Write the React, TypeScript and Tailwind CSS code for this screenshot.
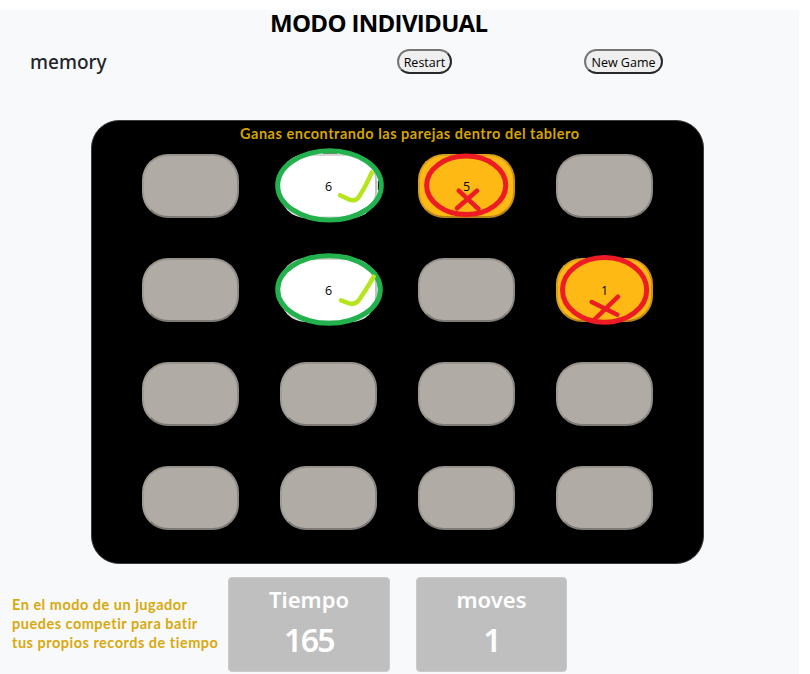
type TileState = "hidden" | "matched" | "wrong";

interface Tile {
  state: TileState;
  value?: number;
}

const hidden: Tile = { state: "hidden" };

const tiles: Tile[] = [
  hidden, { state: "matched", value: 6 }, { state: "wrong", value: 5 }, hidden,
  hidden, { state: "matched", value: 6 }, hidden, { state: "wrong", value: 1 },
  hidden, hidden, hidden, hidden,
  hidden, hidden, hidden, hidden,
];

const tileStyles: Record<TileState, string> = {
  hidden: "bg-[#b0aba5] border-t-[#98938e] border-l-[#a09b95] border-r-[#8d8984] border-b-[#7d7975]",
  matched: "bg-white border-t-[#d5d5d5] border-l-white border-r-[#c3c3c3] border-b-[#e5e5e5]",
  wrong: "bg-[#ffb914] border-t-[#d9a020] border-l-[#d9a020] border-r-[#cb9219] border-b-[#b98417]",
};

function PillButton({ label, className }: { label: string; className: string }) {
  return (
    <button
      className={`h-[25px] shrink-0 rounded-full border-2 border-t-[#767676] border-l-[#767676] border-r-[#292929] border-b-[#292929] bg-[#efefef] pt-[2px] text-[12.5px] leading-[19px] whitespace-nowrap text-black ${className}`}
    >
      {label}
    </button>
  );
}

function Stat({ label, value, className }: { label: string; value: number; className: string }) {
  return (
    <section
      className={`flex h-[95px] shrink-0 flex-col items-center rounded border border-[#cacaca] bg-[#bfbfbf] text-white ${className}`}
    >
      <h2 className="mt-[5px] font-['Noto_Sans',sans-serif] text-[22px] leading-[32px] font-semibold">{label}</h2>
      <p className="mt-[5px] font-['Noto_Sans',sans-serif] text-[32px] leading-[40px] font-semibold tracking-[-1.6px]">
        {value}
      </p>
    </section>
  );
}

/* Hand-drawn marks over the revealed tiles, in board coordinates. */
function Marks() {
  return (
    <svg
      className="pointer-events-none absolute -top-px -left-px h-[443px] w-[612px]"
      viewBox="91 120 612 443"
      fill="none"
      strokeWidth="5"
      strokeLinecap="round"
      strokeLinejoin="round"
    >
      <path stroke="#000" strokeWidth="1.5" strokeLinecap="butt" d="M323 152.8 H337 M378.6 181 V190" />
      <g stroke="#22b14c">
        <ellipse cx="329.5" cy="185.4" rx="51.8" ry="34.7" />
        <ellipse cx="329" cy="289.5" rx="51.3" ry="33.8" />
      </g>
      <g stroke="#b5e61d" strokeWidth="4.5">
        <path d="M340 195.3 L348 199 Q356 203 360 195 Q366 186 371.7 172.7" />
        <path d="M341 300.3 L348 303 Q355 306 360 298.5 Q366 290 373.7 276.7" />
      </g>
      <g stroke="#ed1c24">
        <ellipse cx="466.2" cy="185.3" rx="39.6" ry="29.2" />
        <ellipse cx="604.6" cy="289.9" rx="42.1" ry="32.4" />
        <path strokeWidth="4.5" d="M458.7 190.7 L478.5 209 M477 190.7 L457 208.3" />
        <path strokeWidth="4.5" d="M591.7 302 L617.3 314.7 M618 296.7 L594 320" />
      </g>
    </svg>
  );
}

/* White ovals that widen the matched tiles out to their green rings. */
function MatchedGlow() {
  return (
    <svg
      className="pointer-events-none absolute -top-px -left-px h-[443px] w-[612px]"
      viewBox="91 120 612 443"
      fill="#fff"
    >
      <ellipse cx="329.5" cy="185.4" rx="51" ry="34" />
      <ellipse cx="329" cy="289.5" rx="51" ry="33.5" />
    </svg>
  );
}

export default function App() {
  return (
    <div className="h-[674px] w-[810px] overflow-hidden bg-white pt-[10px] font-['Open_Sans','Noto_Sans',sans-serif]">
      <main className="h-[664px] w-[799px] bg-[#f8f9fb]">
        <h1 className="h-[28px] pl-[270px] text-[24px] leading-[26px] font-bold tracking-[-0.68px] whitespace-nowrap text-black">
          MODO INDIVIDUAL
        </h1>
        <header className="flex h-[82px] items-start pt-[11px]">
          <div className="w-[397px] shrink-0 pl-[30px] font-['Noto_Sans',sans-serif] text-[19px] leading-[27px] font-medium text-[#212529]">
            memory
          </div>
          <PillButton label="Restart" className="w-[55px]" />
          <PillButton label="New Game" className="ml-[132px] w-[79px]" />
        </header>

        <section className="relative ml-[91px] h-[444px] w-[613px] rounded-[28px] border border-[#3b3d3f] bg-black">
          <MatchedGlow />
          <p className="h-[33px] pt-[2px] pl-[148px] font-['Lato',sans-serif] text-[14.5px] leading-[22px] font-bold tracking-[0.52px] whitespace-nowrap text-[#d5a500]">
            Ganas encontrando las parejas dentro del tablero
          </p>
          <div className="relative ml-[50px] grid grid-cols-[repeat(4,97px)] gap-x-[41px] gap-y-[40.15px]">
            {tiles.map((tile, i) => (
              <div
                key={i}
                className={`flex h-[64px] items-center justify-center rounded-[26px] border-2 pt-[2px] text-[12.5px] text-black ${tileStyles[tile.state]}`}
              >
                {tile.value}
              </div>
            ))}
          </div>
          <Marks />
        </section>

        <footer className="flex pt-[13px]">
          <p className="w-[228px] shrink-0 pt-[18px] pl-[12px] font-['Lato',sans-serif] text-[14.5px] leading-[19px] font-bold tracking-[0.5px] whitespace-nowrap text-[#d9a90b]">
            En el modo de un jugador
            <br />
            puedes competir para batir
            <br />
            tus propios records de tiempo
          </p>
          <Stat label="Tiempo" value={165} className="w-[162px]" />
          <Stat label="moves" value={1} className="ml-[26px] w-[151px]" />
        </footer>
      </main>
    </div>
  );
}
